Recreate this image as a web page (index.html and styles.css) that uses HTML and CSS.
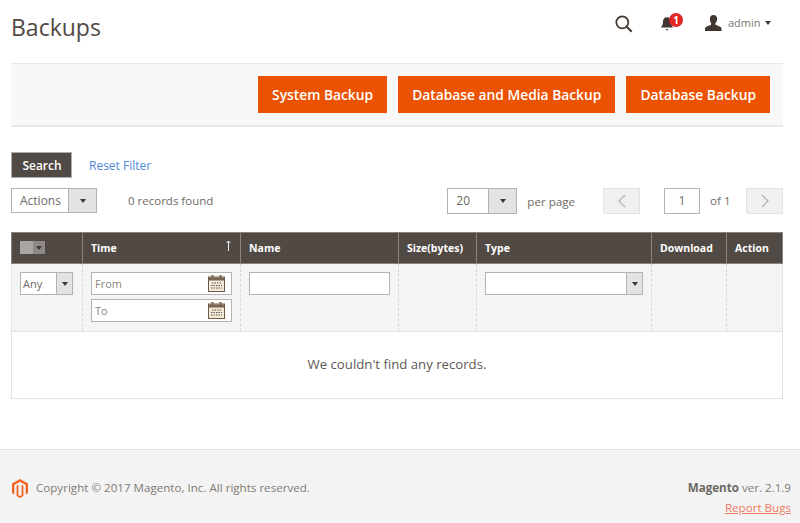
FILE: index.html
```html
<!DOCTYPE html>
<html lang="en">
<head>
<meta charset="utf-8">
<title>Backups</title>
<link rel="stylesheet" href="styles.css">
</head>
<body>
<div class="page">
  <header class="top">
    <h1 class="title">Backups</h1>
    <div class="top-tools">
      <svg class="ic-search" width="20" height="20" viewBox="0 0 20 20"><circle cx="8.300" cy="8.300" r="6" fill="none" stroke="#41362f" stroke-width="1.700"/><path d="M12.700 12.700l5 5" stroke="#41362f" stroke-width="2"/></svg>
      <div class="bell">
        <svg width="14" height="16" viewBox="0 0 14 16"><path d="M7 1.200c-2.600 0-4 2-4 4.300 0 3-.9 4.600-2.200 6h12.400c-1.300-1.400-2.200-3-2.200-6 0-2.300-1.400-4.300-4-4.300z" fill="#41362f"/><path d="M5.600 13h2.800l-1.400 1.800z" fill="#41362f"/></svg>
        <span class="badge">1</span>
      </div>
      <div class="user">
        <svg width="17" height="16" viewBox="0 0 17 16"><path d="M8.500 0c2.300 0 3.600 1.700 3.600 3.900 0 1.700-.8 3.500-1.800 4.500-.3.900.2 1.400 1.400 1.900 2.200.9 4.500 1.500 4.800 3.200V16H0v-2.500c.3-1.700 2.600-2.300 4.800-3.200 1.200-.5 1.700-1 1.400-1.900C5.200 7.400 4.900 5.600 4.900 3.900 4.900 1.700 6.200 0 8.500 0z" fill="#41362f"/></svg>
        <span class="user-name">admin</span>
        <span class="caret user-caret"></span>
      </div>
    </div>
  </header>

  <div class="actions-bar">
    <button class="btn-primary">System Backup</button>
    <button class="btn-primary">Database and Media Backup</button>
    <button class="btn-primary">Database Backup</button>
  </div>

  <div class="search-row">
    <button class="btn-search">Search</button>
    <a class="reset">Reset Filter</a>
  </div>

  <div class="tool-row">
    <div class="tool-left">
      <div class="sel sel-actions"><span class="sel-text">Actions</span><span class="sel-arrow"><span class="caret"></span></span></div>
      <span class="records">0 records found</span>
    </div>
    <div class="tool-right">
      <div class="sel sel-per"><span class="sel-text">20</span><span class="sel-arrow"><span class="caret"></span></span></div>
      <span class="per-label">per page</span>
      <button class="pager prev"><svg width="10" height="14" viewBox="0 0 10 14"><path d="M8 1L2 7l6 6" fill="none" stroke="#b5b5b5" stroke-width="1.300"/></svg></button>
      <div class="page-input">1</div>
      <span class="of">of 1</span>
      <button class="pager"><svg width="10" height="14" viewBox="0 0 10 14"><path d="M2 1l6 6-6 6" fill="none" stroke="#b5b5b5" stroke-width="1.300"/></svg></button>
    </div>
  </div>

  <table class="grid">
    <colgroup>
      <col class="c1"><col class="c2"><col class="c3"><col class="c4"><col class="c5"><col class="c6"><col class="c7">
    </colgroup>
    <thead>
      <tr>
        <th><span class="mass"><span class="mass-box"></span><span class="mass-arrow"><span class="caret"></span></span></span></th>
        <th class="time-head">Time<svg class="sort" width="7" height="11" viewBox="0 0 7 11"><path d="M3.500 1v10M1.500 3L3.500 1l2 2" fill="none" stroke="#f0f0f0" stroke-width="1"/></svg></th>
        <th>Name</th>
        <th>Size(bytes)</th>
        <th>Type</th>
        <th>Download</th>
        <th>Action</th>
      </tr>
    </thead>
    <tbody>
      <tr class="filters">
        <td><div class="sel sel-any"><span class="sel-text">Any</span><span class="sel-arrow"><span class="caret"></span></span></div></td>
        <td>
          <div class="date"><span>From</span><svg class="cal" width="17" height="17" viewBox="0 0 17 17"><use href="#cal"/></svg></div>
          <div class="date date-to"><span>To</span><svg class="cal" width="17" height="17" viewBox="0 0 17 17"><use href="#cal"/></svg></div>
        </td>
        <td><div class="text-input"></div></td>
        <td></td>
        <td><div class="sel sel-type"><span class="sel-text"></span><span class="sel-arrow"><span class="caret"></span></span></div></td>
        <td></td>
        <td></td>
      </tr>
      <tr class="empty"><td colspan="7">We couldn't find any records.</td></tr>
    </tbody>
  </table>
</div>

<footer class="foot">
  <div class="foot-left">
    <svg width="16" height="19" viewBox="0 0 16 19"><path d="M8 0L0 4.600v9.500l2.300 1.300V6l5.700-3.300L13.700 6v9.400l2.300-1.300V4.600z" fill="#f26322"/><path d="M8 19l-3.400-2V6.800l1.800-1v10.400l1.600.9 1.600-.9V5.800l1.800 1V17z" fill="#f26322"/></svg>
    <span>Copyright © 2017 Magento, Inc. All rights reserved.</span>
  </div>
  <div class="foot-right">
    <div class="ver"><b>Magento</b> ver. 2.1.9</div>
    <a class="bugs">Report Bugs</a>
  </div>
</footer>

<svg class="defs" width="0" height="0">
  <symbol id="cal" viewBox="0 0 17 17">
    <rect x="0.500" y="2" width="16" height="14.500" fill="#f4e9d4" stroke="#6d5a48"/>
    <rect x="1" y="2.500" width="15" height="3" fill="#7a6552"/>
    <rect x="3.500" y="0" width="2" height="4" fill="#7a6552"/>
    <rect x="11.500" y="0" width="2" height="4" fill="#7a6552"/>
    <path d="M4 8h10M3 10.500h11M3 13h11" stroke="#5b5b5b" stroke-width="1.200" stroke-dasharray="1.500 1"/>
  </symbol>
</svg>
</body>
</html>
```
FILE: styles.css
```css
* { box-sizing: border-box; }
html, body { margin: 0; padding: 0; }
body {
  width: 800px;
  height: 523px;
  overflow: hidden;
  background: #fff;
  font-family: "Open Sans", "Liberation Sans", sans-serif;
  font-size: 12px;
  color: #41362f;
}
.page { padding: 0 17px 0 11px; height: 449px; }
.top { height: 63px; display: flex; justify-content: space-between; align-items: flex-start; }
.title { margin: 12px 0 0; font-size: 23px; line-height: 31px; font-weight: 400; color: #514943; }
.top-tools { display: flex; align-items: flex-start; padding-top: 14px; margin-right: 12px; }
.bell { position: relative; margin-left: 26px; width: 24px; height: 20px; padding-top: 2px; }
.badge {
  position: absolute; left: 9px; top: -1px; width: 14px; height: 14px; border-radius: 50%;
  background: #e22626; color: #fff; font-size: 10px; line-height: 14px; font-weight: 700; text-align: center;
}
.user { display: flex; align-items: center; margin-left: 21px; height: 16px; margin-top: 1px; }
.user-name { margin-left: 6px; width: 31px; font-size: 11px; color: #7a7571; line-height: 16px; }
.user-caret { margin-left: 6px; }
.caret { display: inline-block; width: 0; height: 0; border-style: solid; border-width: 4px 3.500px 0; border-color: #41362f transparent transparent; }

.actions-bar {
  height: 64px; background: #f8f8f8; border-top: 1px solid #e8e8e8; border-bottom: 2px solid #e8e8e8;
  display: flex; justify-content: flex-end; align-items: flex-start; gap: 11px; padding: 12px 13px 0 0;
}
.btn-primary {
  height: 37px; padding: 0 14px; border: 0; background: #eb5202; color: #fff;
  font: 600 13.800px/37px "Open Sans", sans-serif;
}

.search-row { display: flex; align-items: center; margin-top: 25px; height: 26px; }
.btn-search {
  width: 61px; height: 26px; padding: 1px 0 0 1px; border: 1px solid #adadad; background: #514943; color: #fff;
  font: 600 12px/24px "Open Sans", sans-serif;
}
.reset { margin-left: 17px; color: #4f86d9; font-size: 12px; font-weight: 400; }

.tool-row { display: flex; justify-content: space-between; margin-top: 10px; height: 26px; }
.tool-left, .tool-right { display: flex; align-items: flex-start; }
.sel { display: flex; background: #fff; border: 1px solid #b3b3b3; }
.sel-text { flex: 1; color: #6f6a66; padding-left: 8px; }
.sel-arrow { background: #e3e3e3; border-left: 1px solid #b3b3b3; display: flex; align-items: center; justify-content: center; }
.sel-actions { width: 86px; height: 25px; line-height: 23px; }
.sel-actions .sel-arrow { width: 28px; }
.records { margin-left: 31px; line-height: 26px; color: #6f6a66; font-size: 11.500px; }
.sel-per { width: 70px; height: 26px; line-height: 24px; }
.sel-per .sel-arrow { width: 28px; }
.per-label { margin-left: 10px; line-height: 27px; color: #6f6a66; font-size: 11.600px; }
.pager { width: 37px; height: 26px; padding: 0; background: #f0f0f0; border: 1px solid #e3e3e3; display: flex; align-items: center; justify-content: center; }
.prev { margin-left: 28px; }
.page-input { width: 36px; height: 26px; margin-left: 24px; border: 1px solid #b3b3b3; text-align: center; line-height: 24px; color: #6f6a66; }
.of { margin: 0 17px 0 10px; width: 19px; line-height: 26px; color: #6f6a66; white-space: nowrap; font-size: 11.600px; }

.grid { width: 771px; margin-top: 18px; border-collapse: collapse; table-layout: fixed; }
.c1 { width: 71px; } .c2 { width: 158px; } .c3 { width: 158px; } .c4 { width: 78px; } .c5 { width: 175px; } .c6 { width: 75px; } .c7 { width: 56px; }
.grid th {
  height: 31px; padding: 0 0 1px 8px; background: #514943; color: #fff; text-align: left; vertical-align: middle;
  border: 1px solid #8a837e; font-size: 10.500px; font-weight: 700;
}
.time-head { position: relative; }
.sort { position: absolute; right: 8px; top: 7px; }
.mass { display: flex; width: 25px; height: 13px; }
.mass-box { width: 13px; background: #a9a5a2; }
.mass-arrow { width: 12px; background: #8e8986; display: flex; align-items: center; justify-content: center; }
.filters td {
  height: 68px; background: #f4f4f4; vertical-align: top; padding: 8px 8px 0 8px;
  border-left: 1px dashed #d6d6d6; border-right: 1px dashed #d6d6d6; border-bottom: 1px solid #e3e3e3;
}
.filters td:first-child { border-left: 1px solid #e3e3e3; }
.filters td:last-child { border-right: 1px solid #e3e3e3; }
.sel-any { width: 53px; height: 23px; font-size: 11px; line-height: 22px; }
.sel-any .sel-text { padding-left: 2px; }
.sel-any .sel-arrow { width: 16px; }
.date { height: 23px; display: flex; align-items: center; justify-content: space-between; padding: 0 6px 0 3px; background: #fff; border: 1px solid #b3b3b3; color: #8c8682; font-size: 11px; }
.date-to { margin-top: 4px; }
.text-input { height: 23px; background: #fff; border: 1px solid #b3b3b3; }
.sel-type { height: 23px; }
.sel-type .sel-arrow { width: 16px; }
.empty td { height: 67px; text-align: center; font-size: 13.200px; color: #5f5853; border: 1px solid #e3e3e3; border-top: 0; padding-bottom: 4px; }

.foot {
  height: 74px; background: #f3f3f3; border-top: 1px solid #e3e3e3; display: flex; justify-content: space-between;
  padding: 20px 9px 0 12px; color: #7f7a76; font-size: 11.600px;
}
.foot-left { display: flex; align-items: flex-start; gap: 8px; padding-top: 9px; }
.foot-left span { line-height: 18px; }
.foot-right { text-align: right; line-height: 20px; padding-top: 8px; }
.ver b { font-weight: 700; color: #6d6864; }
.bugs { color: #ee7a63; text-decoration: underline; }
.defs { position: absolute; }
```
